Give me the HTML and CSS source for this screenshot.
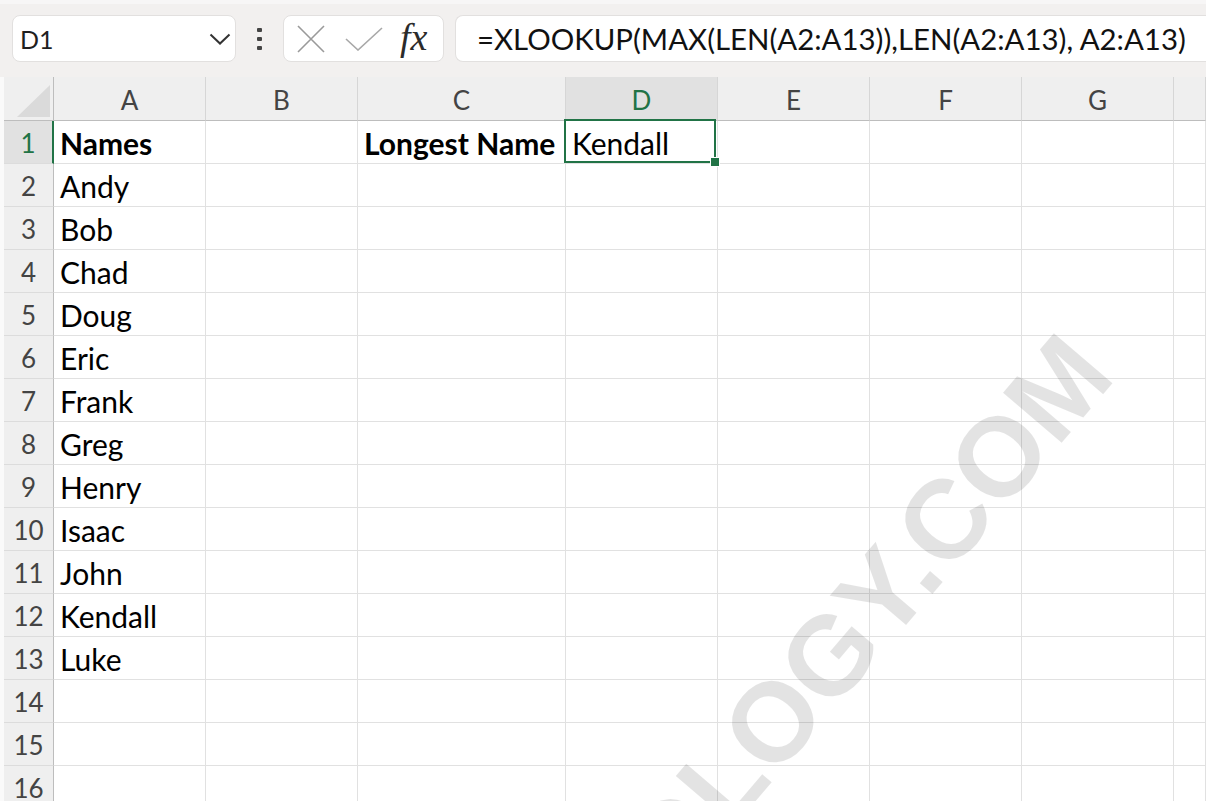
FILE: index.html
```html
<!DOCTYPE html>
<html lang="en">
<head>
<meta charset="utf-8">
<title>Longest Name</title>
<link rel="stylesheet" href="styles.css">
</head>
<body>
<div class="app">
  <div class="toolbar">
    <div class="namebox">
      <span class="namebox-ref">D1</span>
      <svg class="chevron" width="22" height="12" viewBox="0 0 22 12"><path d="M1.5 1.5 L11 10.5 L20.5 1.5" fill="none" stroke="#333" stroke-width="2"/></svg>
    </div>
    <div class="kebab"><i></i><i></i><i></i></div>
    <div class="fxbox">
      <svg class="icon-cancel" width="30" height="28" viewBox="0 0 30 28"><path d="M2 1 L28 27 M28 1 L2 27" stroke="#9a9a9a" stroke-width="1.6" fill="none"/></svg>
      <svg class="icon-enter" width="38" height="24" viewBox="0 0 38 24"><path d="M1 12 L13 23 L37 1" stroke="#a8a8a8" stroke-width="1.6" fill="none"/></svg>
      <span class="fx">fx</span>
    </div>
    <div class="formula">=XLOOKUP(MAX(LEN(A2:A13)),LEN(A2:A13), A2:A13)</div>
  </div>

  <div class="sheet">
    <div class="corner"></div>
    <div class="colhead">A</div>
    <div class="colhead">B</div>
    <div class="colhead">C</div>
    <div class="colhead active">D</div>
    <div class="colhead">E</div>
    <div class="colhead">F</div>
    <div class="colhead">G</div>
    <div class="colhead"></div>

    <div class="rowhead active">1</div>
    <div class="cell bold">Names</div><div class="cell"></div><div class="cell bold">Longest Name</div>
    <div class="cell selected">Kendall<span class="selection"><span class="handle"></span></span></div>
    <div class="cell"></div><div class="cell"></div><div class="cell"></div><div class="cell"></div>

    <div class="rowhead">2</div><div class="cell">Andy</div><div class="cell"></div><div class="cell"></div><div class="cell"></div><div class="cell"></div><div class="cell"></div><div class="cell"></div><div class="cell"></div>
    <div class="rowhead">3</div><div class="cell">Bob</div><div class="cell"></div><div class="cell"></div><div class="cell"></div><div class="cell"></div><div class="cell"></div><div class="cell"></div><div class="cell"></div>
    <div class="rowhead">4</div><div class="cell">Chad</div><div class="cell"></div><div class="cell"></div><div class="cell"></div><div class="cell"></div><div class="cell"></div><div class="cell"></div><div class="cell"></div>
    <div class="rowhead">5</div><div class="cell">Doug</div><div class="cell"></div><div class="cell"></div><div class="cell"></div><div class="cell"></div><div class="cell"></div><div class="cell"></div><div class="cell"></div>
    <div class="rowhead">6</div><div class="cell">Eric</div><div class="cell"></div><div class="cell"></div><div class="cell"></div><div class="cell"></div><div class="cell"></div><div class="cell"></div><div class="cell"></div>
    <div class="rowhead">7</div><div class="cell">Frank</div><div class="cell"></div><div class="cell"></div><div class="cell"></div><div class="cell"></div><div class="cell"></div><div class="cell"></div><div class="cell"></div>
    <div class="rowhead">8</div><div class="cell">Greg</div><div class="cell"></div><div class="cell"></div><div class="cell"></div><div class="cell"></div><div class="cell"></div><div class="cell"></div><div class="cell"></div>
    <div class="rowhead">9</div><div class="cell">Henry</div><div class="cell"></div><div class="cell"></div><div class="cell"></div><div class="cell"></div><div class="cell"></div><div class="cell"></div><div class="cell"></div>
    <div class="rowhead">10</div><div class="cell">Isaac</div><div class="cell"></div><div class="cell"></div><div class="cell"></div><div class="cell"></div><div class="cell"></div><div class="cell"></div><div class="cell"></div>
    <div class="rowhead">11</div><div class="cell">John</div><div class="cell"></div><div class="cell"></div><div class="cell"></div><div class="cell"></div><div class="cell"></div><div class="cell"></div><div class="cell"></div>
    <div class="rowhead">12</div><div class="cell">Kendall</div><div class="cell"></div><div class="cell"></div><div class="cell"></div><div class="cell"></div><div class="cell"></div><div class="cell"></div><div class="cell"></div>
    <div class="rowhead">13</div><div class="cell">Luke</div><div class="cell"></div><div class="cell"></div><div class="cell"></div><div class="cell"></div><div class="cell"></div><div class="cell"></div><div class="cell"></div>
    <div class="rowhead">14</div><div class="cell"></div><div class="cell"></div><div class="cell"></div><div class="cell"></div><div class="cell"></div><div class="cell"></div><div class="cell"></div><div class="cell"></div>
    <div class="rowhead">15</div><div class="cell"></div><div class="cell"></div><div class="cell"></div><div class="cell"></div><div class="cell"></div><div class="cell"></div><div class="cell"></div><div class="cell"></div>
    <div class="rowhead">16</div><div class="cell"></div><div class="cell"></div><div class="cell"></div><div class="cell"></div><div class="cell"></div><div class="cell"></div><div class="cell"></div><div class="cell"></div>
  </div>

  <div class="watermark">OLOGY.COM</div>
</div>
</body>
</html>
```

FILE: styles.css
```css
* { box-sizing: border-box; }

html, body {
  margin: 0;
  padding: 0;
  width: 1206px;
  height: 801px;
  overflow: hidden;
  background: #ffffff;
}

.app {
  position: relative;
  width: 1206px;
  height: 801px;
  overflow: hidden;
  font-family: Lato, "Open Sans", sans-serif;
  color: #000;
}

/* ---------- formula bar ---------- */
.toolbar {
  height: 77px;
  background: #f2f0ef;
  border-top: 4px solid #f7f6f6;
  display: flex;
  align-items: flex-start;
  padding: 11px 0 0 12px;
}

.namebox {
  width: 224px;
  height: 47px;
  background: #fff;
  border: 1px solid #e2e0df;
  border-radius: 8px;
  display: flex;
  align-items: center;
  justify-content: space-between;
  padding: 0 4px 0 7px;
  font-size: 25px;
  color: #1f1f1f;
}

.kebab {
  width: 47px;
  height: 47px;
  display: flex;
  flex-direction: column;
  align-items: center;
  justify-content: center;
  gap: 5px;
}
.kebab i {
  display: block;
  width: 5px;
  height: 4px;
  border-radius: 1px;
  background: #444;
}

.fxbox {
  width: 161px;
  height: 47px;
  background: #fff;
  border: 1px solid #e2e0df;
  border-radius: 8px;
  display: flex;
  align-items: center;
  padding-left: 12px;
}
.icon-cancel { margin-right: 19px; }
.icon-enter { margin-right: 17px; margin-top: 1px; }
.fx {
  font-family: "Liberation Serif", "DejaVu Serif", serif;
  font-style: italic;
  font-size: 38px;
  color: #2b2b2b;
  margin-top: -3px;
}

.formula {
  flex: 1;
  height: 47px;
  margin-left: 11px;
  background: #fff;
  border: 1px solid #e2e0df;
  border-right: none;
  border-radius: 8px 0 0 8px;
  display: flex;
  align-items: center;
  padding-left: 21px;
  font-size: 29.4px;
  color: #111;
  white-space: nowrap;
}

/* ---------- grid ---------- */
.sheet {
  display: grid;
  grid-template-columns: 50px 152px 152px 208px 152px 152px 152px 152px 32px;
  grid-template-rows: 44px repeat(16, 43px);
  padding-left: 4px;
  background: #fafafa;
}

.corner {
  background: #efefef;
  border-right: 1px solid #bdbdbd;
  border-bottom: 1px solid #bdbdbd;
  position: relative;
}
.corner::after {
  content: "";
  position: absolute;
  right: 3px;
  bottom: 3px;
  width: 0;
  height: 0;
  border-left: 33px solid transparent;
  border-bottom: 32px solid #dadada;
}

.colhead {
  background: #efefef;
  border-right: 1px solid #d6d6d6;
  border-bottom: 1px solid #bdbdbd;
  display: flex;
  align-items: center;
  justify-content: center;
  font-size: 26px;
  color: #444;
  padding-top: 2px;
}
.colhead.active {
  background: #e1e1e1;
  color: #217346;
}

.rowhead {
  background: #efefef;
  border-right: 1px solid #bdbdbd;
  border-bottom: 1px solid #dcdcdc;
  display: flex;
  align-items: center;
  justify-content: center;
  font-size: 26px;
  color: #444;
  padding-top: 2px;
}
.rowhead.active {
  background: #e1e1e1;
  color: #217346;
  border-right: 2px solid #217346;
}

.cell {
  background: #fff;
  border-right: 1px solid #e1e1e1;
  border-bottom: 1px solid #e1e1e1;
  display: flex;
  align-items: center;
  padding: 2px 0 0 6px;
  font-size: 30px;
  color: #000;
  white-space: nowrap;
}
.cell.bold { font-weight: 700; }

.cell.selected { position: relative; }
.selection {
  position: absolute;
  left: -2px;
  top: -2px;
  right: 1px;
  bottom: 0;
  border: 2px solid #217346;
  pointer-events: none;
}
.handle {
  position: absolute;
  right: -5px;
  bottom: -5px;
  width: 8px;
  height: 8px;
  background: #217346;
  outline: 1px solid #fff;
}

/* ---------- watermark ---------- */
.watermark {
  position: absolute;
  left: 524px;
  top: 557px;
  font-family: "Liberation Sans", Arial, sans-serif;
  font-weight: 700;
  font-size: 112px;
  line-height: 1;
  white-space: nowrap;
  color: rgba(0, 0, 0, 0.11);
  transform: rotate(-49.5deg);
  transform-origin: center;
  pointer-events: none;
}
```
